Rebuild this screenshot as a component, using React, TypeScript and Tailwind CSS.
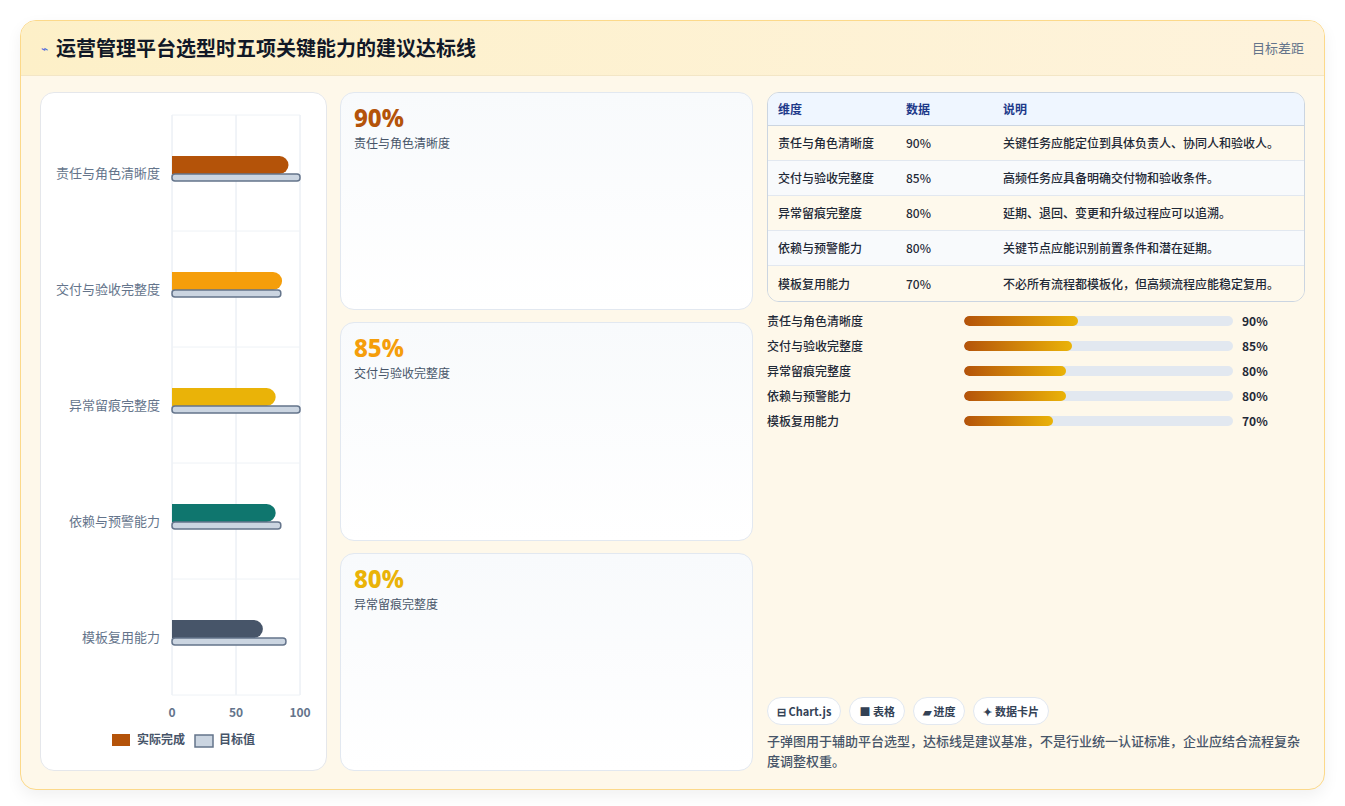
import React from "react";

const rows = [
  { n: "责任与角色清晰度", v: 90, t: 100, c: "#b45309", d: "关键任务应能定位到具体负责人、协同人和验收人。", w: 114 },
  { n: "交付与验收完整度", v: 85, t: 85, c: "#f59e0b", d: "高频任务应具备明确交付物和验收条件。", w: 108 },
  { n: "异常留痕完整度", v: 80, t: 100, c: "#eab308", d: "延期、退回、变更和升级过程应可以追溯。", w: 102 },
  { n: "依赖与预警能力", v: 80, t: 85, c: "#0f766e", d: "关键节点应能识别前置条件和潜在延期。", w: 102 },
  { n: "模板复用能力", v: 70, t: 89, c: "#475569", d: "不必所有流程都模板化，但高频流程应能稳定复用。", w: 89 },
];
const actual = [91, 86, 81, 81, 71];
const font = { fontFamily: '"Noto Sans CJK SC", "Noto Sans", sans-serif' };

function Chart() {
  const x0 = 131, W = 128, top = 22, band = 116;
  return (
    <svg width="286" height="677" className="block">
      {[0, 50, 100].map((v) => (
        <line key={v} x1={x0 + (W * v) / 100} x2={x0 + (W * v) / 100} y1={top} y2={top + band * 5} stroke="#e2e8f0" />
      ))}
      {[0, 1, 2, 3, 4, 5].map((i) => (
        <line key={i} x1={x0} x2={x0 + W} y1={top + band * i} y2={top + band * i} stroke="#eef2f6" />
      ))}
      {rows.map((r, i) => {
        const cy = top + band * i + 58;
        const aw = (W * actual[i]) / 100;
        const tw = (W * r.t) / 100;
        return (
          <g key={i}>
            <text x={x0 - 12} y={cy + 5} textAnchor="end" fontSize="13" fill="#64748b" style={font}>{r.n}</text>
            <path d={`M${x0} ${cy - 17} H${x0 + aw - 9} a9 9 0 0 1 9 9 v0 a9 9 0 0 1 -9 9 H${x0} Z`} fill={r.c} />
            <rect x={x0} y={cy + 1} width={tw} height={7} rx={3} fill="#cbd5e1" stroke="#64748b" strokeWidth="1.5" />
          </g>
        );
      })}
      {[0, 50, 100].map((v) => (
        <text key={v} x={x0 + (W * v) / 100} y={624} textAnchor="middle" fontSize="12" fontWeight="bold" fill="#64748b" style={font}>{v}</text>
      ))}
      <rect x={71} y={641} width={18} height={12} fill="#b45309" />
      <text x={96} y={651} fontSize="12" fontWeight="bold" fill="#475569" style={font}>实际完成</text>
      <rect x={154} y={642} width={18} height={12} fill="#cbd5e1" stroke="#64748b" strokeWidth="1.5" />
      <text x={178} y={651} fontSize="12" fontWeight="bold" fill="#475569" style={font}>目标值</text>
    </svg>
  );
}

export default function App() {
  return (
    <div className="w-[1345px] h-[806px] bg-white pt-[20px] px-[20px]" style={font}>
      <div className="h-[770px] rounded-[16px] border border-[#fcd98a] bg-[#fef8ea] overflow-hidden flex flex-col shadow-[0_6px_16px_rgba(0,0,0,0.06)]">
        <div className="h-[55px] shrink-0 flex items-center justify-between px-[20px] bg-gradient-to-r from-[#fdf0c8] to-[#fef3dc] border-b border-[#f3e6c6]">
          <div className="flex items-center gap-[8px]">
            <span className="text-[12px] text-[#4f6bdc]">⌁</span>
            <span className="text-[20px] font-bold text-[#111827]">运营管理平台选型时五项关键能力的建议达标线</span>
          </div>
          <span className="text-[13px] text-[#64748b]">目标差距</span>
        </div>
        <div className="flex-1 flex gap-[13px] px-[19px] pt-[16px] pb-[19px]">
          <div className="w-[287px] shrink-0 bg-white rounded-[14px] border border-[#e5e7eb]">
            <Chart />
          </div>
          <div className="w-[413px] shrink-0 flex flex-col gap-[12px]">
            {rows.slice(0, 3).map((r) => (
              <div key={r.n} className="flex-1 rounded-[14px] border border-[#e2e8f0] bg-gradient-to-b from-[#f8fafc] to-white px-[13px] pt-[9px]">
                <div className="text-[24px] font-extrabold leading-[32px]" style={{ color: r.c, fontFamily: '"Noto Sans", sans-serif' }}>{r.v}%</div>
                <div className="text-[12px] text-[#475569]">{r.n}</div>
              </div>
            ))}
          </div>
          <div className="flex-1 ml-[1px] flex flex-col justify-between">
            <div>
              <div className="rounded-[12px] border border-[#cbd5e1] overflow-hidden text-[12px] font-medium">
                <div className="flex h-[33px] items-center bg-[#eff6ff] border-b border-[#cbd5e1] text-[#1e3a8a] font-bold">
                  <div className="w-[138px] pl-[10px]">维度</div>
                  <div className="w-[97px]">数据</div>
                  <div>说明</div>
                </div>
                {rows.map((r, i) => (
                  <div key={r.n} className={`flex h-[35px] items-center text-[#1f2937] ${i < 4 ? "border-b border-[#e2e8f0]" : ""} ${i % 2 === 0 ? "bg-[#fef9ec]" : "bg-[#f8fafc]"}`}>
                    <div className="w-[138px] pl-[10px]">{r.n}</div>
                    <div className="w-[97px]">{r.v}%</div>
                    <div>{r.d}</div>
                  </div>
                ))}
              </div>
              <div className="mt-[6px] flex flex-col">
                {rows.map((r) => (
                  <div key={r.n} className="flex items-center h-[25px] text-[12px] font-medium">
                    <div className="w-[197px] text-[#1f2937]">{r.n}</div>
                    <div className="w-[269px] h-[10px] rounded-full bg-[#e2e8f0] overflow-hidden">
                      <div className="h-full rounded-full bg-gradient-to-r from-[#b45309] to-[#eab308]" style={{ width: r.w }} />
                    </div>
                    <div className="ml-[9px] font-bold text-[#1f2937]">{r.v}%</div>
                  </div>
                ))}
              </div>
            </div>
            <div>
              <div className="flex gap-[8px]">
                {["⊟ Chart.js", "■ 表格", "▰ 进度", "✦ 数据卡片"].map((c) => (
                  <span key={c} className="h-[28px] px-[9px] flex items-center rounded-full bg-white border border-[#e2e8f0] text-[11px] font-bold text-[#334155]">{c}</span>
                ))}
              </div>
              <p className="mt-[6px] text-[13px] leading-[20px] font-medium text-[#475569]">子弹图用于辅助平台选型，达标线是建议基准，不是行业统一认证标准，企业应结合流程复杂度调整权重。</p>
            </div>
          </div>
        </div>
      </div>
    </div>
  );
}
